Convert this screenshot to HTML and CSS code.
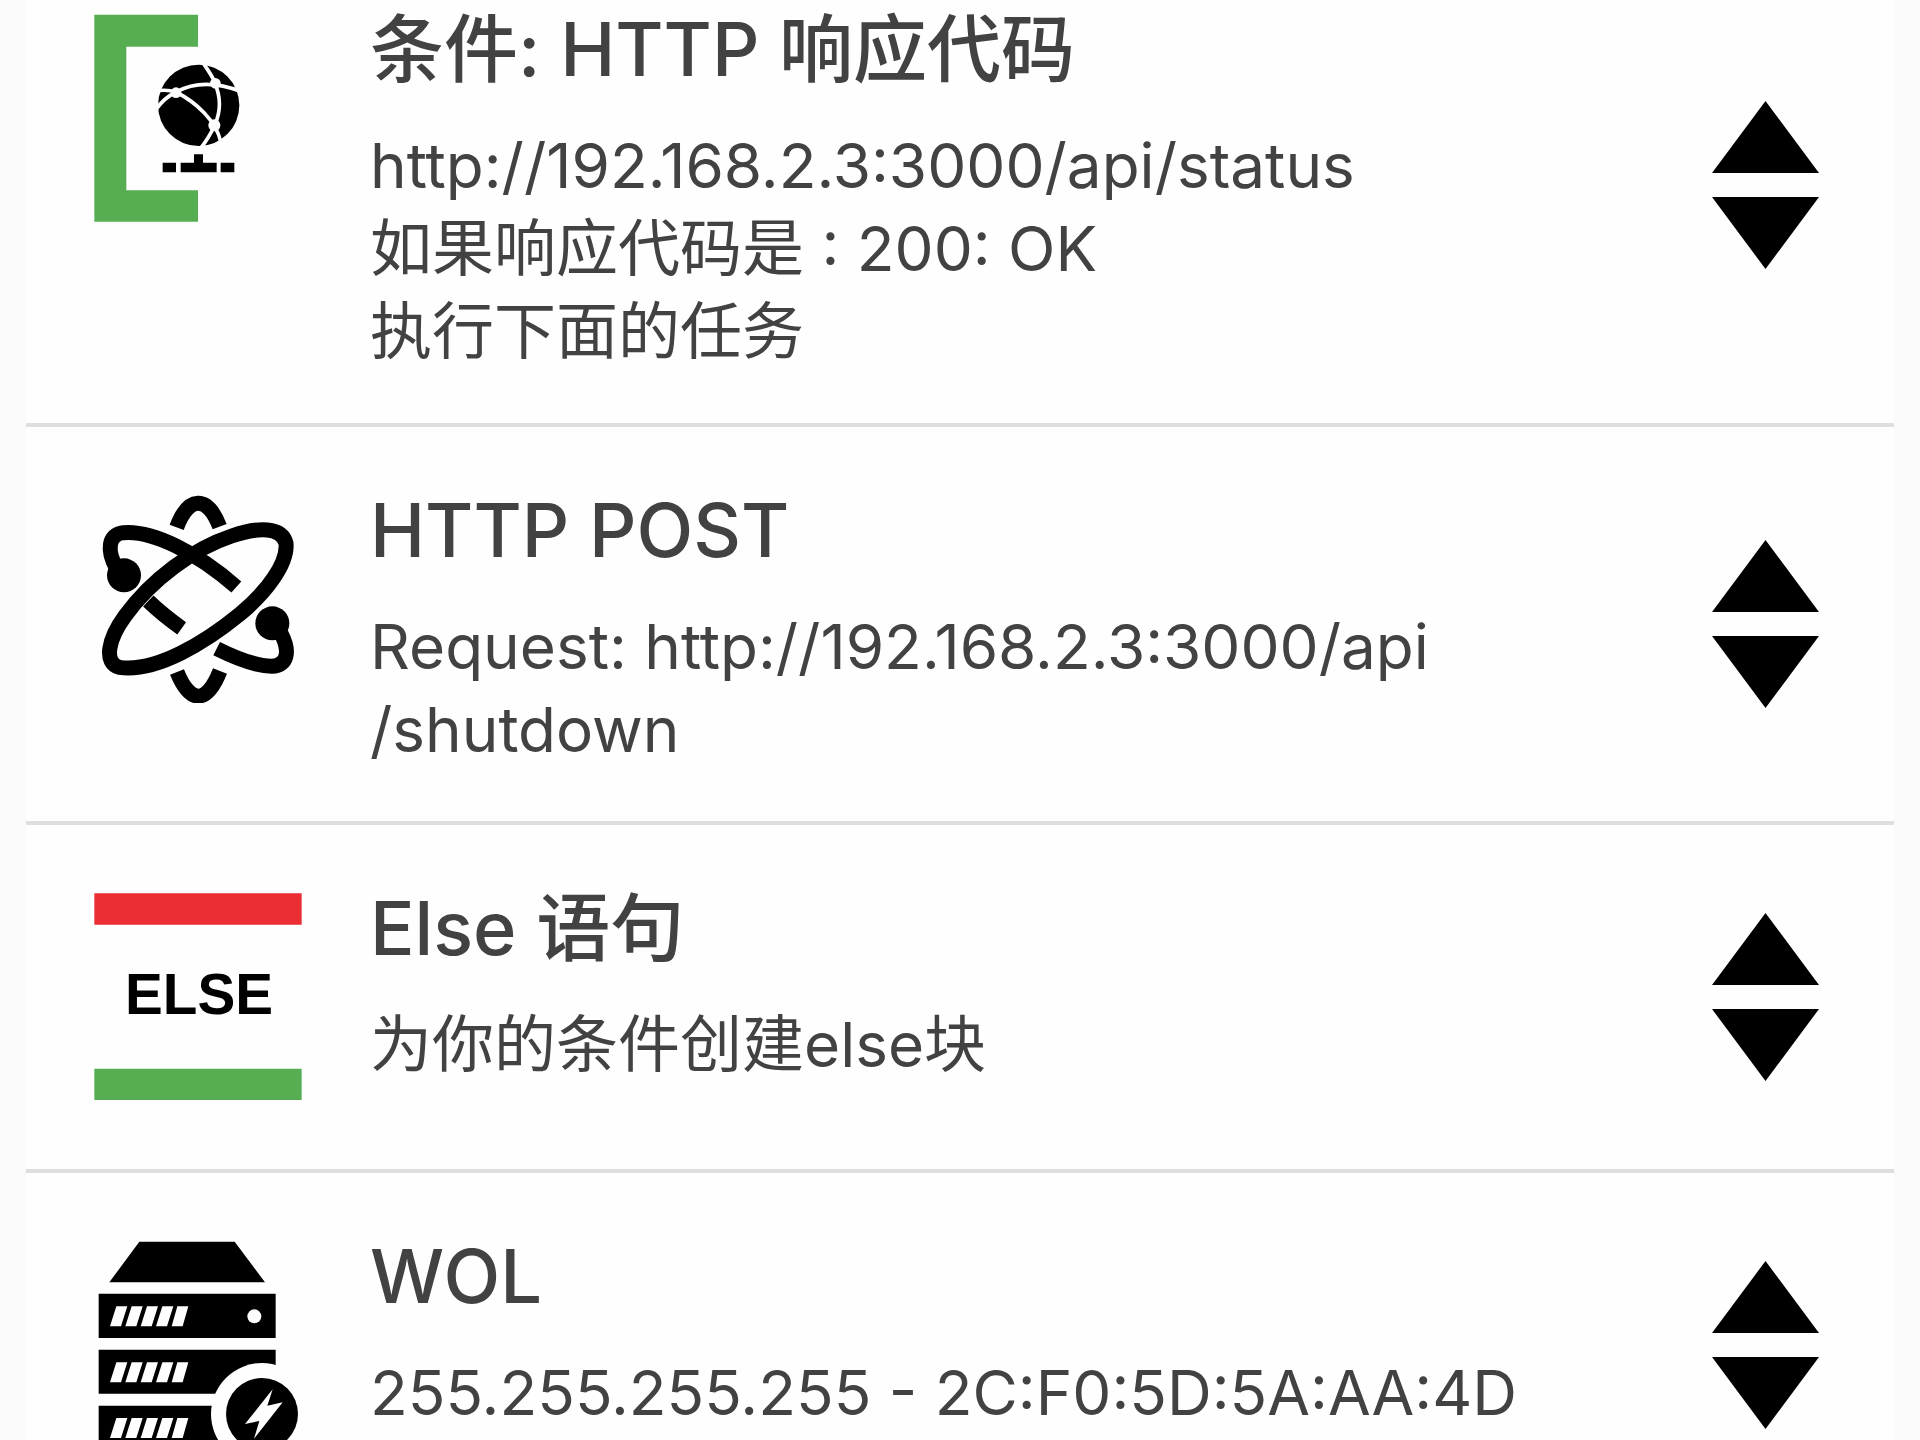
FILE: index.html
```
<!DOCTYPE html>
<html lang="zh-CN">
<head>
  <meta charset="UTF-8">
  <title>任务</title>
  <link rel="stylesheet" href="styles.css">
</head>
<body>

<svg class="defs" width="0" height="0" aria-hidden="true">
  <symbol id="sort" viewBox="0 0 107 168">
    <path d="M53.500 0L107 72H0zM0 96H107L53.500 168z"/>
  </symbol>
</svg>

<ul class="tasks">
  <li class="task">
    <svg class="icon" viewBox="42 42 624 624" aria-hidden="true">
      <path fill="#57ad52" d="M43 44H354V140H139V571H354V665H43z"/>
      <circle cx="356" cy="316" r="122"/>
      <g fill="none" stroke="#fefefe" stroke-width="11">
        <path d="M370 190C382 208 395 225 404 246C422 292 424 330 404 376C392 402 382 420 364 442"/>
        <path d="M228 328C248 300 268 286 288 276C328 254 388 238 482 274"/>
        <path d="M230 272C250 270 270 270 288 276C350 308 408 362 422 424"/>
      </g>
      <g fill="#fefefe">
        <circle cx="288" cy="278" r="16"/>
        <circle cx="406" cy="250" r="16"/>
        <circle cx="403" cy="376" r="18"/>
      </g>
      <path d="M248 488H288V517H248zM302 488H342V463H369V488H410V517H302zM422 488H463V517H422z"/>
    </svg>
    <div class="text">
      <h2>条件: HTTP 响应代码</h2>
      <p>http://192.168.2.3:3000/api/status<br>如果响应代码是 : 200: OK<br>执行下面的任务</p>
    </div>
    <button class="sort" type="button" aria-label="排序"><svg><use href="#sort"/></svg></button>
  </li>

  <li class="task">
    <svg class="icon" viewBox="42 45 624 624" aria-hidden="true">
      <g fill="none" stroke="#000" stroke-width="45">
        <path d="M290 142C325 48 382 44 419 140"/>
        <path d="M291 576C330 672 380 674 420 573"/>
        <path d="M108 262C82 214 82 164 130 158C215 150 350 216 469 321"/>
        <path d="M205 363C235 392 270 420 305 445"/>
        <path d="M410 506C470 536 530 558 575 559C622 556 632 516 603 460"/>
        <path d="M118 562C70 548 84 478 135 408C215 298 340 206 455 168C535 140 606 140 618 190C624 250 560 336 480 402C380 484 230 578 118 562z"/>
      </g>
      <circle cx="132" cy="286" r="51"/>
      <circle cx="577" cy="430" r="51"/>
    </svg>
    <div class="text">
      <h2>HTTP POST</h2>
      <p>Request: http://192.168.2.3:3000/api<br>/shutdown</p>
    </div>
    <button class="sort" type="button" aria-label="排序"><svg><use href="#sort"/></svg></button>
  </li>

  <li class="task">
    <svg class="icon" viewBox="42 41 624 624" aria-hidden="true">
      <path fill="#eb2d34" d="M43 42H665V136H43z"/>
      <path fill="#57ad52" d="M43 568H665V662H43z"/>
      <text class="else" x="357" y="403">ELSE</text>
    </svg>
    <div class="text">
      <h2>Else 语句</h2>
      <p>为你的条件创建else块</p>
    </div>
    <button class="sort" type="button" aria-label="排序"><svg><use href="#sort"/></svg></button>
  </li>

  <li class="task">
    <svg class="icon" viewBox="42 63 624 624" aria-hidden="true">
      <path d="M178 65H464L555 187H88zM56 221H587V354H56zM56 389H587V521H56zM56 557H587V687H56z"/>
      <g fill="#fefefe">
        <path d="M109 259H142L123 319H90zM155 259H188L169 319H136zM201 259H234L215 319H182zM247 259H280L261 319H228zM292 259H325L308 319H275z"/>
        <path d="M109 427H142L123 487H90zM155 427H188L169 487H136zM201 427H234L215 487H182zM247 427H280L261 487H228zM292 427H325L308 487H275z"/>
        <path d="M109 594H142L123 654H90zM155 594H188L169 654H136zM201 594H234L215 654H182zM247 594H280L261 654H228zM292 594H325L308 654H275z"/>
        <circle cx="523" cy="289" r="21"/>
        <circle cx="546" cy="582" r="153"/>
      </g>
      <circle cx="546" cy="582" r="108"/>
      <path fill="#fefefe" d="M578 508L495 612L538 603L522 656L608 547L562 557z"/>
    </svg>
    <div class="text">
      <h2>WOL</h2>
      <p>255.255.255.255 - 2C:F0:5D:5A:AA:4D</p>
    </div>
    <button class="sort" type="button" aria-label="排序"><svg><use href="#sort"/></svg></button>
  </li>
</ul>

</body>
</html>
```
FILE: styles.css
```
body {
  height: 100vh;
  margin: 0;
  overflow: hidden;
  background-color: #fafafa;
  color: #424242;
  font-family: Inter, "Noto Sans CJK SC", sans-serif;
}

.defs {
  display: none;
}

/* the list is scrolled part way into its first task */
.tasks {
  margin: -54px 26px 0;
  padding: 0;
  list-style: none;
  background-color: #fefefe;
}

.task {
  display: flex;
  gap: 68px;
  padding: 68px 75px 50px 68px;
  border-bottom: 4px solid #dedede;
}

.icon {
  flex: none;
  width: 208px;
  height: 208px;
  margin-bottom: 18px;
}

.else {
  font: bold 170px "Liberation Sans", sans-serif;
  text-anchor: middle;
}

.text {
  flex: 1;
}

.text h2 {
  margin: 0 0 40px;
  font-size: 74px;
  font-weight: 500;
  line-height: 70px;
}

.text p {
  margin: 0;
  font-size: 62px;
  line-height: 83px;
}

.sort {
  align-self: center;
  margin: 0 0 18px;
  padding: 0;
  border: 0;
  background: none;
}

.sort svg {
  display: block;
  width: 107px;
  height: 168px;
}
```
